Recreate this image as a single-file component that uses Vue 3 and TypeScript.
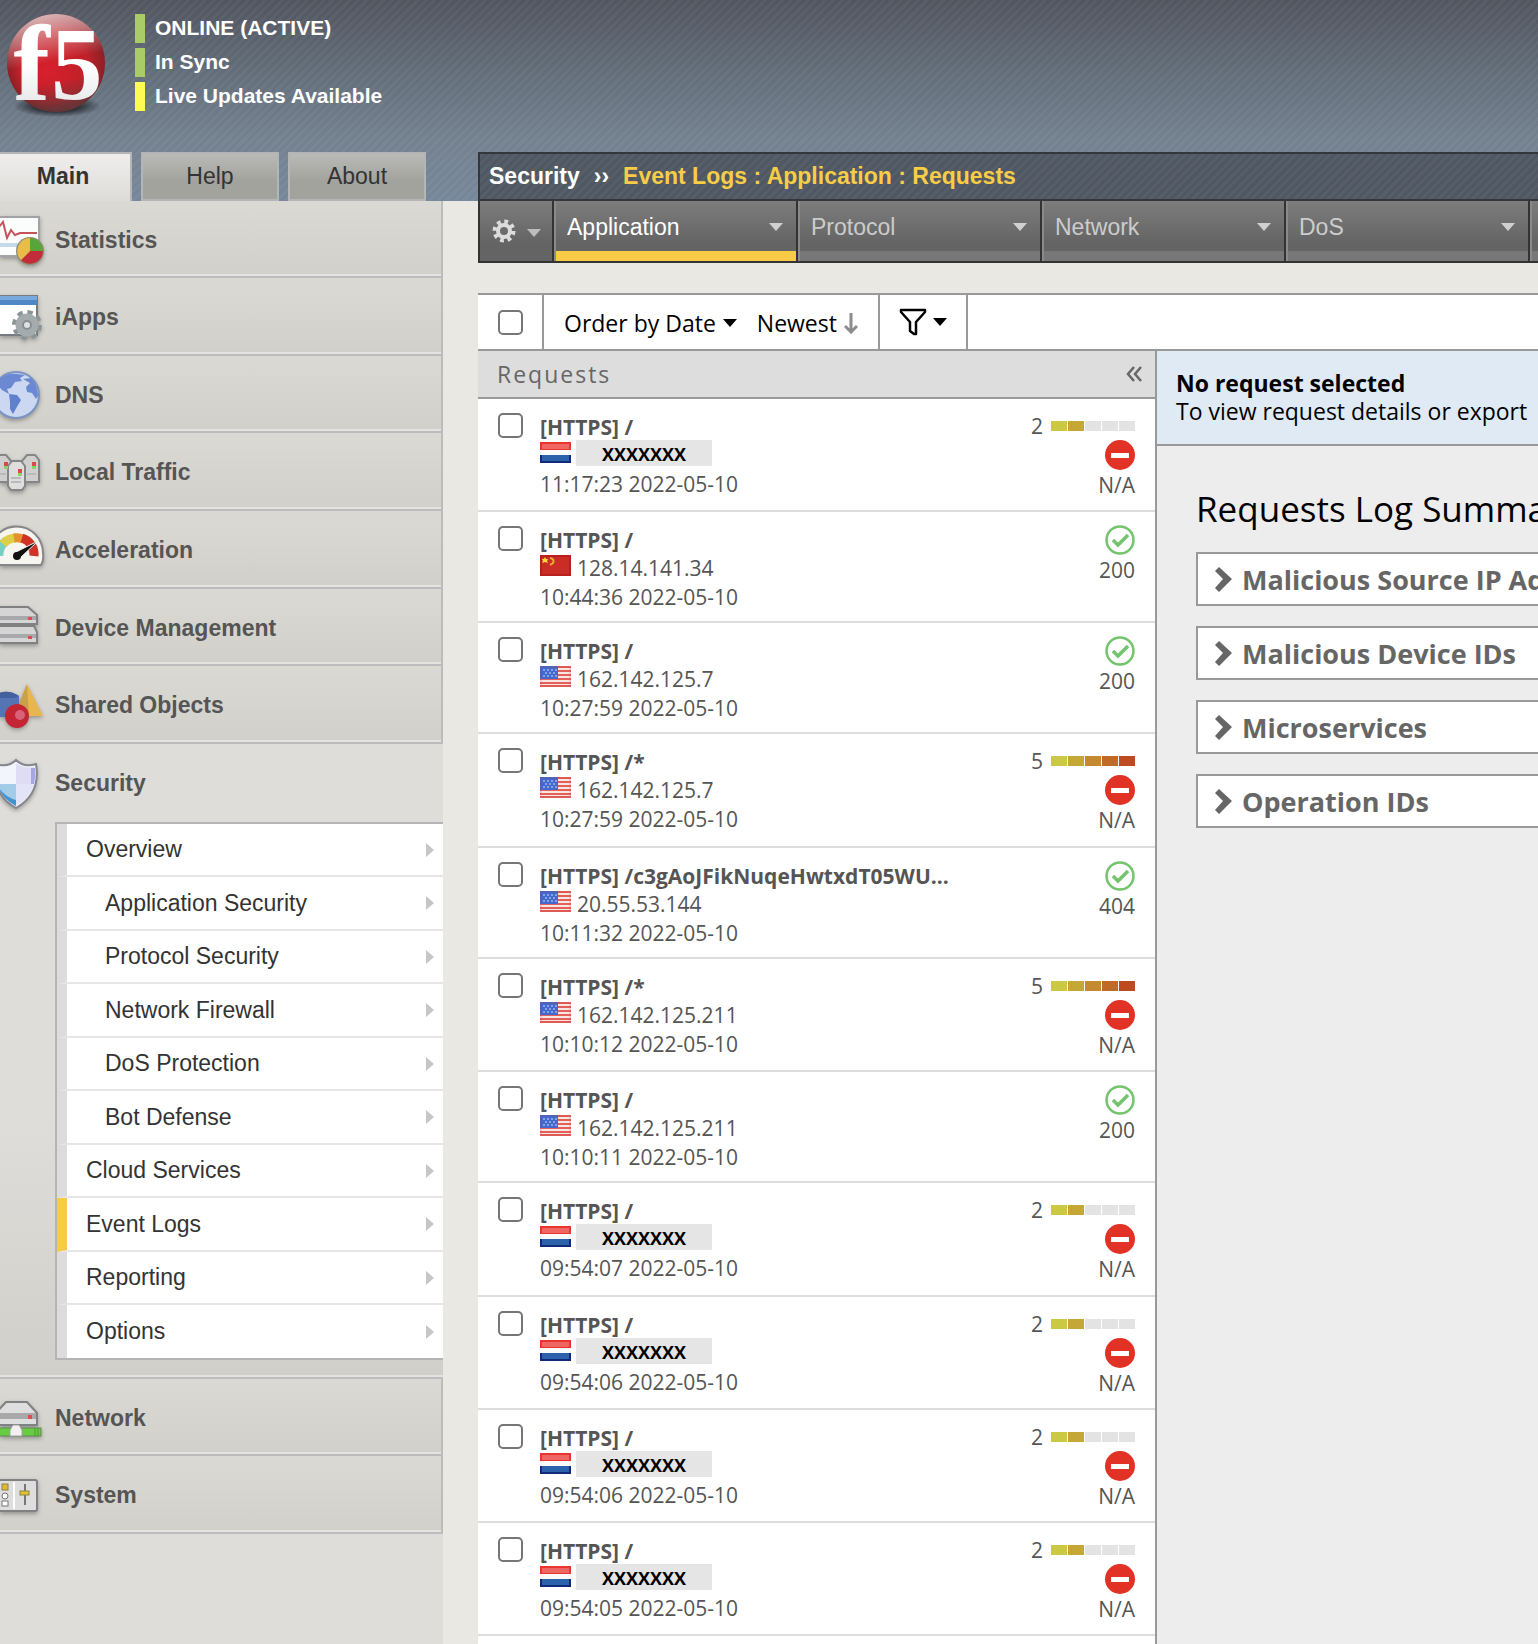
<script setup lang="ts">
import { reactive, ref } from 'vue'

interface RequestEntry {
  path: string
  flag: 'nl' | 'cn' | 'us'
  ip: string | null
  time: string
  rating: number
  code: string
}

const navTop = [
  { id: 'statistics', label: 'Statistics' },
  { id: 'iapps', label: 'iApps' },
  { id: 'dns', label: 'DNS' },
  { id: 'traffic', label: 'Local Traffic' },
  { id: 'acceleration', label: 'Acceleration' },
  { id: 'device', label: 'Device Management' },
  { id: 'shared', label: 'Shared Objects' },
]

const subMenu = [
  { label: 'Overview', nested: false },
  { label: 'Application Security', nested: true },
  { label: 'Protocol Security', nested: true },
  { label: 'Network Firewall', nested: true },
  { label: 'DoS Protection', nested: true },
  { label: 'Bot Defense', nested: true },
  { label: 'Cloud Services', nested: false },
  { label: 'Event Logs', nested: false },
  { label: 'Reporting', nested: false },
  { label: 'Options', nested: false },
]

const logTabs = ['Application', 'Protocol', 'Network', 'DoS']
const activeTab = ref('Application')

const requests: RequestEntry[] = [
  { path: '/', flag: 'nl', ip: null, time: '11:17:23 2022-05-10', rating: 2, code: 'N/A' },
  { path: '/', flag: 'cn', ip: '128.14.141.34', time: '10:44:36 2022-05-10', rating: 0, code: '200' },
  { path: '/', flag: 'us', ip: '162.142.125.7', time: '10:27:59 2022-05-10', rating: 0, code: '200' },
  { path: '/*', flag: 'us', ip: '162.142.125.7', time: '10:27:59 2022-05-10', rating: 5, code: 'N/A' },
  { path: '/c3gAoJFikNuqeHwtxdT05WU...', flag: 'us', ip: '20.55.53.144', time: '10:11:32 2022-05-10', rating: 0, code: '404' },
  { path: '/*', flag: 'us', ip: '162.142.125.211', time: '10:10:12 2022-05-10', rating: 5, code: 'N/A' },
  { path: '/', flag: 'us', ip: '162.142.125.211', time: '10:10:11 2022-05-10', rating: 0, code: '200' },
  { path: '/', flag: 'nl', ip: null, time: '09:54:07 2022-05-10', rating: 2, code: 'N/A' },
  { path: '/', flag: 'nl', ip: null, time: '09:54:06 2022-05-10', rating: 2, code: 'N/A' },
  { path: '/', flag: 'nl', ip: null, time: '09:54:06 2022-05-10', rating: 2, code: 'N/A' },
  { path: '/', flag: 'nl', ip: null, time: '09:54:05 2022-05-10', rating: 2, code: 'N/A' },
]

const selected = reactive<boolean[]>(requests.map(() => false))
const toggleAll = (e: Event) => {
  const on = (e.target as HTMLInputElement).checked
  requests.forEach((_, i) => (selected[i] = on))
}

const summaries = ['Malicious Source IP Addresses', 'Malicious Device IDs', 'Microservices', 'Operation IDs']
</script>

<template>
  <div class="page">
    <header class="top">
      <div class="brand">
        <svg class="logo" width="120" height="120" viewBox="0 0 120 120" role="img" aria-label="f5">
          <defs>
            <radialGradient id="ball" cx="0.5" cy="0.5" r="0.5" fx="0.4" fy="0.6">
              <stop offset="0" stop-color="#d8202c" />
              <stop offset="0.7" stop-color="#bf2029" />
              <stop offset="1" stop-color="#8c2026" />
            </radialGradient>
            <linearGradient id="gloss" x1="0.3" y1="0" x2="0.5" y2="1">
              <stop offset="0" stop-color="#fff" stop-opacity="0.7" />
              <stop offset="0.5" stop-color="#fff" stop-opacity="0" />
              <stop offset="0.7" stop-color="#444" stop-opacity="0" />
              <stop offset="1" stop-color="#444" stop-opacity="0.6" />
            </linearGradient>
            <linearGradient id="letters" x1="0" y1="0" x2="0" y2="1">
              <stop offset="0.5" stop-color="#fff" />
              <stop offset="1" stop-color="#dcdfe2" />
            </linearGradient>
            <radialGradient id="floor">
              <stop offset="0.5" stop-color="#1c1f26" stop-opacity="0.8" />
              <stop offset="1" stop-color="#1c1f26" stop-opacity="0" />
            </radialGradient>
          </defs>
          <ellipse cx="57" cy="106" rx="44" ry="11" fill="url(#floor)" />
          <circle cx="56" cy="63" r="49" fill="url(#ball)" />
          <circle cx="56" cy="63" r="49" fill="url(#gloss)" />
          <g class="logo-text" fill="url(#letters)">
            <text x="14" y="99" font-size="106" stroke="url(#letters)" stroke-width="1">f</text>
            <text x="51" y="99" font-size="103">5</text>
          </g>
        </svg>
        <ul class="status">
          <li class="ok">ONLINE (ACTIVE)</li>
          <li class="ok">In Sync</li>
          <li class="warn">Live Updates Available</li>
        </ul>
      </div>
      <div class="bar-row">
        <nav class="page-tabs">
          <button class="page-tab current" type="button">Main</button>
          <button class="page-tab" type="button">Help</button>
          <button class="page-tab" type="button">About</button>
        </nav>
        <div class="crumbs">
          <span>Security</span><span class="sep">››</span>
          <span class="trail">Event Logs : Application : Requests</span>
        </div>
      </div>
    </header>

    <div class="body">
      <aside class="sidebar">
        <ul class="nav">
          <li v-for="item in navTop" :key="item.id" class="nav-item">
            <a href="#" class="nav-link">
              <svg class="nav-icon" width="48" height="74" viewBox="0 1 48 74" aria-hidden="true">
                <g v-if="item.id === 'statistics'">
                  <rect x="-6" y="17" width="45" height="39" fill="#fbfcfc" stroke="#a2a3a5" stroke-width="2" />
                  <rect x="-5" y="43" width="43" height="4" fill="#c5dbea" />
                  <path d="M-1 27L3 22L7 38L11 30L15 35L20 33L37 33" fill="none" stroke="#c6525a" stroke-width="2" />
                  <circle cx="30" cy="51" r="14" fill="#8d8d72" />
                  <path d="M30 51V38A13 13 0 0 1 43 51Z" fill="#58a63a" />
                  <path d="M30 51H43A13 13 0 0 1 21 60Z" fill="#c32c39" />
                  <path d="M30 51L21 60A13 13 0 0 1 30 38Z" fill="#eabb46" />
                </g>
                <g v-else-if="item.id === 'iapps'">
                  <rect x="-6" y="19" width="43" height="39" fill="#fff" stroke="#777b82" stroke-width="2" />
                  <rect x="-5" y="19" width="42" height="9" fill="#4f86c6" />
                  <rect x="-5" y="19" width="42" height="4" fill="#78a9dd" />
                  <circle cx="27" cy="48" r="12" fill="none" stroke="#8b9597" stroke-width="6" stroke-dasharray="5 4.42" />
                  <circle cx="27" cy="48" r="8" fill="#d9dcdc" stroke="#a3abac" stroke-width="7" />
                  <circle cx="27" cy="48" r="4" fill="#dfe2e2" stroke="#858d90" stroke-width="2" />
                </g>
                <g v-else-if="item.id === 'dns'">
                  <circle cx="16" cy="40" r="23" fill="#ccd8f2" stroke="#7b93c4" stroke-width="2" />
                  <path d="M-4 28Q4 17 17 19L25 20L20 23L22 26L15 27L11 33L7 34L9 39L2 35Z" fill="#6a89d2" />
                  <path d="M9 39L17 40L21 45L18 50L13 59L10 54L10 47Z" fill="#5f80cc" />
                  <path d="M23 24L31 23Q38 30 38 41L36 44L32 38L27 37L26 32L30 28Z" fill="#6a89d2" />
                </g>
                <g v-else-if="item.id === 'traffic'" stroke="#858688" stroke-width="2">
                  <path d="M-8 50V28L-4 23H6L11 29V50Z" fill="#cfcfcf" />
                  <path d="M22 50V29L27 23H35L39 28V50Z" fill="#cfcfcf" />
                  <path d="M8 34L12 29H21L25 34V54L22 58H11L8 54Z" fill="#dedede" />
                  <path d="M11 46H21M11 50H21M27 42H36M0 42H6" stroke="#bababa" />
                  <g stroke="none">
                    <path d="M4 30h4v4h-4zM32 30h4v4h-4zM18 37h4v4h-4z" fill="#d84a4a" />
                    <path d="M4 34h4v3h-4zM32 34h4v3h-4zM18 41h4v3h-4z" fill="#86d36b" />
                  </g>
                </g>
                <g v-else-if="item.id === 'acceleration'">
                  <path d="M-10 55V43A26 26 0 0 1 43 43Q44 51 41 55Z" fill="#f6f5f0" stroke="#858688" stroke-width="2" />
                  <path d="M-1 46A17 17 0 0 1 6 31" fill="none" stroke="#77cfc4" stroke-width="9" />
                  <path d="M3 34A17 17 0 0 1 16 28" fill="none" stroke="#dfcf48" stroke-width="9" />
                  <path d="M14 28A17 17 0 0 1 23 29" fill="none" stroke="#e6912e" stroke-width="9" />
                  <path d="M22 28A17 17 0 0 1 34 46" fill="none" stroke="#cf3327" stroke-width="9" />
                  <path d="M14 43L38 31L19 49Z" fill="#111" stroke="#f6f5f0" stroke-width="1" />
                  <circle cx="17" cy="46" r="4" fill="#111" />
                </g>
                <g v-else-if="item.id === 'device'" stroke="#808183" stroke-width="2">
                  <path d="M-5 19H28L37 27V36H-5Z" fill="#d5d5d6" />
                  <path d="M-4 28H36V32H-4Z" fill="#a9a9ab" stroke="none" />
                  <path d="M-5 38H34L37 44V55H-5Z" fill="#d5d5d6" />
                  <path d="M-4 46H36V50H-4Z" fill="#a9a9ab" stroke="none" />
                  <path d="M28 29h4v3h-4zM28 48h4v3h-4z" fill="#e04b50" stroke="none" />
                </g>
                <g v-else>
                  <path d="M27 19L43 51H16Z" fill="#e8b64c" />
                  <path d="M27 19L29 51H14Z" fill="#caa04a" />
                  <path d="M-5 30Q7 23 19 31V52H-5Z" fill="#5474b4" />
                  <path d="M-5 30Q7 23 19 31L14 33H-5Z" fill="#43619f" />
                  <circle cx="17" cy="51" r="12" fill="#c32535" />
                  <circle cx="20" cy="50" r="5" fill="#e0708c" opacity="0.8" />
                </g>
              </svg>
              <span>{{ item.label }}</span>
            </a>
          </li>
          <li class="nav-item open">
            <a href="#" class="nav-link">
              <svg class="nav-icon" width="48" height="74" viewBox="0 0 48 74" aria-hidden="true">
                <path d="M16 16Q24 24 36 20Q41 50 16 64Q-9 50 -4 20Q8 24 16 16Z" fill="#f2f5fb" stroke="#85868c" stroke-width="2" />
                <path d="M16 19Q24 25 34 23Q35 32 34 40H16Z" fill="#dfddf5" />
                <path d="M31 24H35Q36 32 34 40H31Z" fill="#a7a4e8" />
                <path d="M16 40H34Q31 53 16 62Z" fill="#e4e4f8" />
                <path d="M16 40V62Q2 53 -2 40Z" fill="#a3cce8" />
                <path d="M16 56V62Q2 54 -1 44Q6 54 16 56Z" fill="#4292cf" />
              </svg>
              <span>Security</span>
            </a>
            <ul class="sub">
              <li v-for="s in subMenu" :key="s.label" :class="{ nested: s.nested, active: s.label === 'Event Logs' }">
                <a href="#">
                  <span>{{ s.label }}</span>
                  <svg width="8" height="14" viewBox="0 0 8 14" aria-hidden="true"><path d="M0 0L8 7L0 14Z" fill="#c6c6c6" /></svg>
                </a>
              </li>
            </ul>
          </li>
          <li class="nav-item">
            <a href="#" class="nav-link">
              <svg class="nav-icon" width="48" height="74" viewBox="0 1 48 74" aria-hidden="true">
                <path d="M-4 35L6 24H27L37 35V47H-4Z" fill="#dededf" stroke="#808183" stroke-width="2" />
                <path d="M-3 35H36V41H-3Z" fill="#a9a9ab" />
                <path d="M28 37h4v4h-4z" fill="#e04b50" />
                <rect x="-4" y="50" width="45" height="8" fill="#68cc43" stroke="#5f8b50" stroke-width="1" />
                <path d="M35 50V58M38 50V58" stroke="#4f9a36" stroke-width="1" />
                <path d="M10 58V52L13 47H19L22 52V58Z" fill="#f1f1f1" stroke="#a0a0a0" stroke-width="1" />
              </svg>
              <span>Network</span>
            </a>
          </li>
          <li class="nav-item">
            <a href="#" class="nav-link">
              <svg class="nav-icon" width="48" height="74" viewBox="0 1 48 74" aria-hidden="true">
                <rect x="-6" y="25" width="43" height="31" rx="2" fill="#dedede" stroke="#808183" stroke-width="2" />
                <path d="M14 27V54" stroke="#fff" stroke-width="2" />
                <rect x="2" y="29" width="6" height="6" fill="#e3b92f" stroke="#8d8148" />
                <circle cx="5" cy="41" r="3" fill="#fff" stroke="#777" />
                <rect x="2" y="46" width="6" height="5" fill="#fff" stroke="#777" />
                <path d="M25 29V50" stroke="#777" stroke-width="2" />
                <rect x="20" y="36" width="9" height="4" fill="#e3c22f" stroke="#8d8148" />
              </svg>
              <span>System</span>
            </a>
          </li>
        </ul>
      </aside>

      <main class="main">
        <nav class="log-tabs">
          <button class="gear" type="button" aria-label="Settings">
            <svg width="24" height="24" viewBox="0 0 24 24" aria-hidden="true">
              <circle cx="12" cy="12" r="9" fill="none" stroke="#dcdcdc" stroke-width="5" stroke-dasharray="3.6 3.47" />
              <circle cx="12" cy="12" r="6" fill="none" stroke="#dcdcdc" stroke-width="4" />
            </svg>
            <svg class="gear-caret" width="14" height="8" viewBox="0 0 14 8" aria-hidden="true"><path d="M0 0H14L7 8Z" fill="#bdbdbd" /></svg>
          </button>
          <button
            v-for="t in logTabs"
            :key="t"
            type="button"
            class="log-tab"
            :class="{ active: t === activeTab }"
            @click="activeTab = t"
          >
            <span>{{ t }}</span>
            <svg width="14" height="8" viewBox="0 0 14 8" aria-hidden="true"><path d="M0 0H14L7 8Z" fill="#d0d0d0" /></svg>
          </button>
          <div class="log-tab rest"></div>
        </nav>

        <div class="toolbar">
          <div class="cell pick">
            <input type="checkbox" class="check" aria-label="Select all requests" @change="toggleAll" />
          </div>
          <div class="cell order">
            <button type="button">
              Order by Date
              <svg width="14" height="8" viewBox="0 0 14 8" aria-hidden="true"><path d="M0 0H14L7 8Z" /></svg>
            </button>
            <button type="button">
              Newest
              <svg width="14" height="21" viewBox="0 0 14 21" aria-hidden="true"><path d="M7 0V19M1 13L7 19L13 13" fill="none" stroke="#8c8c8c" stroke-width="3" /></svg>
            </button>
          </div>
          <button class="cell filter" type="button" aria-label="Filter">
            <svg width="28" height="28" viewBox="0 0 28 28" aria-hidden="true"><path d="M2 2H26V4L17 14V26L15 26L11 23V14L2 4Z" fill="none" stroke="#000" stroke-width="2.5" stroke-linejoin="round" /></svg>
            <svg width="14" height="8" viewBox="0 0 14 8" aria-hidden="true"><path d="M0 0H14L7 8Z" /></svg>
          </button>
        </div>

        <div class="split">
          <section class="list">
            <div class="list-head">
              <h2>Requests</h2>
              <button type="button" aria-label="Collapse">
                <svg width="17" height="16" viewBox="0 0 17 16" aria-hidden="true"><path d="M8 1L2 8L8 15M15 1L9 8L15 15" fill="none" stroke="#666" stroke-width="2.5" /></svg>
              </button>
            </div>
            <ul class="rows">
              <li v-for="(r, i) in requests" :key="i" class="row" :class="{ blocked: r.rating > 0 }">
                <input :id="'req' + i" v-model="selected[i]" type="checkbox" class="check" />
                <label class="info" :for="'req' + i">
                  <strong>[HTTPS] {{ r.path }}</strong>
                  <span class="source">
                    <svg class="flag" width="31" height="21" viewBox="0 0 31 21" aria-hidden="true">
                      <template v-if="r.flag === 'nl'">
                        <rect width="31" height="8" fill="#e8352e" />
                        <rect y="8" width="31" height="5" fill="#fafafa" />
                        <rect y="13" width="31" height="8" fill="#0f2a78" />
                        <rect x="2" y="13" width="27" height="6" fill="#2c62ab" />
                        <rect x="2" y="2" width="27" height="5" fill="#fff" opacity="0.25" />
                      </template>
                      <template v-else-if="r.flag === 'cn'">
                        <rect width="31" height="21" fill="#b7201c" />
                        <rect x="2" y="2" width="27" height="17" fill="#c92d25" />
                        <path d="M5 2L6 4H8L7 6L8 8L5 7L2 8L3 6L2 4H4Z" fill="#f6dc3c" />
                        <path d="M10 3Q15 4 13 8L10 10" fill="none" stroke="#e3b233" stroke-width="2" />
                      </template>
                      <template v-else>
                        <rect width="31" height="21" fill="#f7e6e2" />
                        <path d="M0 1H31M0 5H31M0 9H31M0 13H31M0 17H31M0 20H31" stroke="#e4605a" stroke-width="2" />
                        <rect width="18" height="13" fill="#4169cf" />
                        <path d="M3 4H17M5 7H17M3 10H17" stroke="#cfdcf8" stroke-width="1" stroke-dasharray="2 2" />
                        <rect x="1" y="1" width="29" height="19" fill="none" stroke="#b5452e" stroke-width="1" opacity="0.3" />
                      </template>
                    </svg>
                    <span v-if="r.ip" class="ip">{{ r.ip }}</span>
                    <span v-else class="mask">XXXXXXX</span>
                  </span>
                  <span>{{ r.time }}</span>
                </label>
                <div class="result">
                  <div v-if="r.rating" class="level">
                    <span>{{ r.rating }}</span>
                    <i v-for="n in 5" :key="n" :class="n <= r.rating ? 'l' + n : ''"></i>
                  </div>
                  <svg v-if="r.rating" width="30" height="30" viewBox="0 0 30 30" role="img" aria-label="Blocked">
                    <circle cx="15" cy="15" r="15" fill="#e23125" /><rect x="6" y="13" width="18" height="5" fill="#fff" />
                  </svg>
                  <svg v-else width="30" height="30" viewBox="0 0 30 30" role="img" aria-label="Legal">
                    <circle cx="15" cy="15" r="13.5" fill="none" stroke="#73c46d" stroke-width="2.5" />
                    <path d="M8 15L13 20L23 10" fill="none" stroke="#73c46d" stroke-width="3.5" />
                  </svg>
                  <span class="code">{{ r.code }}</span>
                </div>
              </li>
            </ul>
          </section>

          <section class="detail">
            <div class="notice">
              <strong>No request selected</strong>
              <span>To view request details or export</span>
            </div>
            <div class="summary">
              <h1>Requests Log Summary</h1>
              <button v-for="s in summaries" :key="s" type="button" class="card">
                <svg width="17" height="25" viewBox="0 0 17 25" aria-hidden="true"><path d="M0 4L4 0L17 12L4 25L0 21L8 12Z" fill="#666" /></svg>
                {{ s }}
              </button>
            </div>
          </section>
        </div>
      </main>
    </div>
  </div>
</template>

<style>
html,
body {
  margin: 0;
  background: #e9e8e2;
}
</style>

<style scoped>
.page {
  display: flex;
  flex-direction: column;
  min-height: 100vh;
  overflow: hidden;
  font-family: 'Liberation Sans', Arial, sans-serif;
  font-size: 23px;
}
.page *,
.page {
  box-sizing: border-box;
}
ul {
  list-style: none;
  margin: 0;
  padding: 0;
}
button {
  font: inherit;
  color: inherit;
  background: none;
  border: 0;
  border-radius: 0;
  padding: 0;
  margin: 0;
  cursor: pointer;
}
a {
  color: inherit;
  text-decoration: none;
}
svg {
  display: block;
  flex: none;
}

.top {
  background:
    repeating-linear-gradient(135deg, rgba(255, 255, 255, 0.04) 0 3px, transparent 3px 6px),
    linear-gradient(#51555f, #64707c 40%, #74818f 70%, #76879a);
}
.brand {
  display: flex;
  height: 152px;
}
.logo-text {
  font-family: 'Liberation Serif', 'Times New Roman', serif;
  font-weight: bold;
}
.status {
  display: flex;
  flex-direction: column;
  gap: 5px;
  padding: 14px 0 0 15px;
  color: #fff;
  font-size: 21px;
  font-weight: bold;
  line-height: 27px;
}
.status li {
  border-left: 10px solid #a9cc66;
  padding: 0 0 2px 10px;
}
.status .warn {
  border-color: #fdfb51;
}
.bar-row {
  display: flex;
  height: 49px;
}
.page-tabs {
  display: flex;
  gap: 9px;
  width: 478px;
  flex: none;
}
.page-tab {
  width: 138px;
  border: 2px solid #b4b5b7;
  background: linear-gradient(#b9b9b6, #a3a39e 60%);
  color: #333;
  padding-bottom: 1px;
}
.page-tab.current {
  width: 132px;
  border-width: 2px 2px 0 0;
  padding: 0 4px 3px 0;
  background: linear-gradient(#efeeed, #dddcd8);
  font-weight: bold;
}
.crumbs {
  flex: 1;
  display: flex;
  align-items: center;
  gap: 14px;
  min-width: 0;
  padding-left: 9px;
  border: solid #33363b;
  border-width: 2px 0 2px 2px;
  background:
    repeating-linear-gradient(135deg, rgba(255, 255, 255, 0.04) 0 3px, transparent 3px 6px),
    #4f5762;
  color: #fff;
  font-weight: bold;
  white-space: nowrap;
}
.trail {
  color: #f8cd46;
}

.body {
  display: flex;
  flex: 1;
}
.sidebar {
  width: 443px;
  flex: none;
  margin-right: 35px;
  background: #dedddA;
}
.nav-item {
  height: 78px;
  border: solid #bcbcbd;
  border-width: 0 2px 2px 0;
  background: linear-gradient(#dad9d4, #d1d0ca);
  box-shadow: inset 0 -2px #e4e3df;
}
.nav-item:first-child,
.nav-item:nth-child(3n) {
  height: 77px;
}
.nav-item.open {
  height: auto;
  padding-bottom: 17px;
  border-right: 0;
  background: linear-gradient(#dedddA 60%, #d0cfc9);
}
.nav-link {
  display: flex;
  align-items: center;
  gap: 7px;
  height: 78px;
  color: #555;
  font-weight: bold;
}
.nav-icon {
  align-self: flex-start;
  filter: drop-shadow(0 2px 2px rgba(0, 0, 0, 0.3));
}
.sub {
  margin-left: 55px;
  border: solid #b5b5b6;
  border-width: 2px 0 2px 2px;
  background: #fff;
}
.sub li {
  height: 53px;
  border-left: 10px solid #dcdcdc;
  border-bottom: 2px solid #e6e6e6;
}
.sub li:nth-child(even) {
  height: 54px;
}
.sub li:last-child {
  height: 53px;
  border-bottom: 0;
}
.sub li.active {
  border-left-color: #f8cb46;
}
.sub a {
  display: flex;
  align-items: center;
  justify-content: space-between;
  height: 100%;
  padding: 0 9px 0 19px;
  color: #333;
}
.sub .nested a {
  padding-left: 38px;
}

.main {
  flex: 1;
  min-width: 0;
  display: flex;
  flex-direction: column;
}
.log-tabs {
  display: flex;
  height: 62px;
  flex: none;
  overflow: hidden;
  border: solid #333;
  border-width: 0 0 2px 2px;
  margin-bottom: 30px;
}
.gear {
  display: flex;
  align-items: center;
  gap: 11px;
  width: 74px;
  flex: none;
  padding-left: 12px;
  border-right: 2px solid #333;
  background: linear-gradient(#7d7d7d, #646464 70%);
}
.gear-caret {
  margin-top: 4px;
}
.log-tab {
  --stripe: #777;
  display: flex;
  align-items: center;
  justify-content: space-between;
  width: 244px;
  flex: none;
  padding: 2px 15px 10px 13px;
  box-shadow:
    inset -2px 0 #333,
    inset 2px 0 #8a8a8a,
    inset 0 -10px var(--stripe);
  background: linear-gradient(#7d7d7d, #646464 70%);
  color: #ccc;
}
.log-tab.active {
  --stripe: #f8cb46;
  color: #fff;
}
.toolbar {
  display: flex;
  height: 58px;
  flex: none;
  border: solid #999;
  border-width: 2px 0;
  background: #fff;
  color: #000;
}
.toolbar,
.split {
  font-family: 'Open Sans', 'Noto Sans', sans-serif;
}
.cell {
  display: flex;
  align-items: center;
  border-right: 2px solid #999;
}
.pick {
  width: 66px;
  padding-left: 20px;
}
.order {
  width: 336px;
  padding: 2px 0 0 20px;
  gap: 20px;
}
.order button {
  display: flex;
  align-items: center;
  gap: 7px;
  white-space: nowrap;
}
.filter {
  width: 88px;
  padding-left: 19px;
  gap: 6px;
}
.check {
  appearance: none;
  flex: none;
  width: 25px;
  height: 25px;
  margin: 0;
  border: 2px solid #767676;
  border-radius: 5px;
  background: #fff;
}
.check:checked {
  background: #1a73e8;
}

.split {
  flex: 1;
  display: flex;
}
.list {
  width: 679px;
  flex: none;
  border-right: 2px solid #999;
  background: #fff;
  color: #555;
}
.list-head {
  display: flex;
  align-items: center;
  justify-content: space-between;
  height: 48px;
  padding: 0 12px 0 19px;
  border-bottom: 2px solid #999;
  background: #ddd;
  color: #666;
}
.list-head h2 {
  margin: 0;
  font-size: 23px;
  font-weight: normal;
  letter-spacing: 2px;
}
.row {
  display: flex;
  height: 111px;
  padding: 13px 20px 0;
  border-bottom: 2px solid #ddd;
  font-size: 21px;
  line-height: 28px;
}
.row.blocked {
  height: 113px;
}
.row.blocked:nth-child(4n) {
  height: 114px;
}
.row .check {
  margin: 1px 17px 0 0;
}
.info {
  flex: 1;
  display: flex;
  flex-direction: column;
  padding-top: 1px;
}
.source {
  display: flex;
  height: 29px;
  gap: 5px;
}
.flag {
  margin-top: 1px;
}
.ip {
  padding-left: 1px;
}
.mask {
  width: 136px;
  height: 26px;
  margin-top: -1px;
  background: #e5e5e5;
  color: #000;
  font-size: 18px;
  font-weight: bold;
  text-align: center;
}
.result {
  display: flex;
  flex-direction: column;
  align-items: flex-end;
}
.level {
  display: flex;
  align-items: center;
  gap: 1px;
  height: 28px;
}
.level span {
  margin-right: 7px;
}
.level i {
  width: 16px;
  height: 10px;
  background: #e3e3e3;
}
.level .l1 { background: #cbc943; }
.level .l2 { background: #c5a735; }
.level .l3 { background: #c58930; }
.level .l4 { background: #c06a28; }
.level .l5 { background: #bd4a20; }
.code {
  margin-top: 1px;
}

.detail {
  flex: 1;
  min-width: 0;
  overflow: hidden;
  background: #ededed;
  white-space: nowrap;
}
.notice {
  display: flex;
  flex-direction: column;
  height: 95px;
  padding: 18px 0 0 19px;
  border-bottom: 2px solid #999;
  background: #dfeaf5;
  color: #000;
  line-height: 28px;
}
.summary {
  display: flex;
  flex-direction: column;
  gap: 20px;
  padding: 40px 0 0 39px;
}
.summary h1 {
  margin: 0;
  color: #000;
  font-size: 35px;
  font-weight: normal;
  line-height: 46px;
}
.card {
  display: flex;
  align-items: center;
  gap: 10px;
  height: 54px;
  padding-left: 17px;
  border: 2px solid #999;
  border-right: 0;
  background: #fff;
  color: #666;
  font-size: 27px;
  font-weight: bold;
}
</style>
